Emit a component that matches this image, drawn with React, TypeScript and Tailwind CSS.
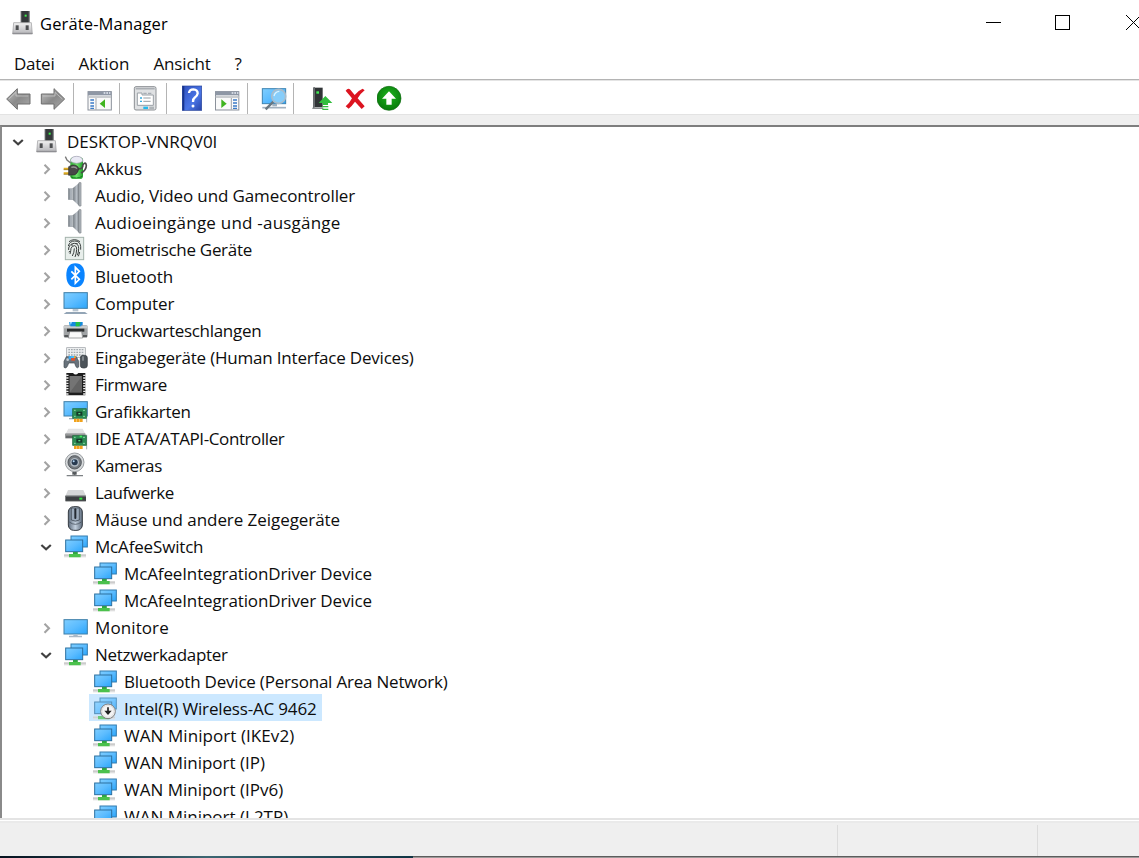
import type { ReactNode } from 'react';

interface TreeItem {
  label: string;
  icon: ReactNode;
  level: 0 | 1 | 2;
  open?: boolean;
  selected?: boolean;
  tracking?: string;
}

// Gradients shared by all icons
function Defs() {
  return (
    <svg width="0" height="0" className="absolute">
      <defs>
        <linearGradient id="screen" x1="0" y1="0" x2="1" y2="1">
          <stop offset="0" stopColor="#7fceff" />
          <stop offset="0.5" stopColor="#5cbcff" />
          <stop offset="1" stopColor="#2aa5fb" />
        </linearGradient>
        <linearGradient id="metal" x1="0" y1="0" x2="0" y2="1">
          <stop offset="0" stopColor="#f2f2f2" />
          <stop offset="1" stopColor="#b4b4b8" />
        </linearGradient>
        <linearGradient id="cone" x1="0" y1="0" x2="1" y2="0">
          <stop offset="0" stopColor="#6d747b" />
          <stop offset="0.6" stopColor="#b9c0c7" />
          <stop offset="1" stopColor="#6f757b" />
        </linearGradient>
        <linearGradient id="arrow" x1="0" y1="0" x2="1" y2="1">
          <stop offset="0" stopColor="#c4c4c4" />
          <stop offset="0.5" stopColor="#8a8a8a" />
          <stop offset="1" stopColor="#a9a9a9" />
        </linearGradient>
        <linearGradient id="book" x1="0" y1="0" x2="1" y2="1">
          <stop offset="0" stopColor="#2f50bd" />
          <stop offset="0.6" stopColor="#4a75e6" />
          <stop offset="1" stopColor="#2743a8" />
        </linearGradient>
        <linearGradient id="battery" x1="0" y1="0" x2="1" y2="0">
          <stop offset="0" stopColor="#2fae35" />
          <stop offset="0.5" stopColor="#6fe36c" />
          <stop offset="1" stopColor="#1e9a28" />
        </linearGradient>
        <linearGradient id="mouseBody" x1="0" y1="0" x2="1" y2="0">
          <stop offset="0" stopColor="#5d6b7c" />
          <stop offset="0.5" stopColor="#c3d0de" />
          <stop offset="1" stopColor="#5d6b7c" />
        </linearGradient>
        <radialGradient id="go" cx="0.5" cy="0.4" r="0.6">
          <stop offset="0" stopColor="#1db41d" />
          <stop offset="1" stopColor="#087a0b" />
        </radialGradient>
      </defs>
    </svg>
  );
}

function Icon({ children }: { children: ReactNode }) {
  return (
    <svg viewBox="0 0 75 81" className="h-[27px] w-[25px] shrink-0">
      {children}
    </svg>
  );
}

const hostIcon = (
  <Icon>
    <rect x="29" y="6" width="27" height="35" fill="#55595b" />
    <rect x="33" y="6" width="19" height="34" fill="#35393b" />
    <rect x="41" y="17" width="6" height="6" fill="#3df04b" />
    <path d="M8 41H61L64 75H5Z" fill="url(#metal)" stroke="#98989c" strokeWidth="2" />
    <path d="M5 73H64" stroke="#8a8a8e" strokeWidth="3" />
    <rect x="14" y="49" width="9" height="14" fill="#4e5052" />
    <rect x="44" y="49" width="9" height="14" fill="#4e5052" />
  </Icon>
);

const batteryIcon = (
  <Icon>
    <rect x="22" y="10" width="38" height="65" rx="10" fill="url(#battery)" />
    <path d="M22 22Q23 7 41 7T60 22Q50 28 41 28T22 22" fill="#e9e9f4" stroke="#9a9aac" strokeWidth="2" />
    <path d="M7 8L12 18L23 27" stroke="#777" strokeWidth="4" fill="none" />
    <path d="M46 45Q60 45 60 32Q68 22 70 34Q70 50 54 57" stroke="#4a4a4a" strokeWidth="5" fill="none" />
    <path d="M2 44H18M2 58H18" stroke="#e0ac20" strokeWidth="6" />
    <path d="M2 47H18M2 61H18" stroke="#896610" strokeWidth="2" />
    <path d="M17 38L28 33Q44 32 47 44Q46 56 36 62L17 64Z" fill="#484848" stroke="#292929" strokeWidth="2" />
    <path d="M25 40Q36 37 42 44" stroke="#969696" strokeWidth="4" fill="none" />
    <path d="M23 68Q40 77 58 67" stroke="#137b1c" strokeWidth="3" fill="none" />
  </Icon>
);

const speakerIcon = (
  <Icon>
    <rect x="16" y="23" width="14" height="33" fill="url(#cone)" stroke="#7b8289" />
    <path d="M29 22L49 5V75L29 56Z" fill="url(#cone)" />
    <path d="M48 5H54V75H48Z" fill="#b4babf" stroke="#7c8288" strokeWidth="2" />
    <path d="M29 22V56" stroke="#e4e8eb" strokeWidth="2" />
  </Icon>
);

const fingerprintIcon = (
  <Icon>
    <rect x="7" y="7" width="55" height="67" fill="#e8eeeb" stroke="#a3b3ac" strokeWidth="3" />
    <g fill="none" stroke="#3c4140" strokeWidth="3">
      <path d="M18 20Q34 8 51 20" />
      <path d="M16 33Q20 18 35 18Q52 18 53 35V44" />
      <path d="M17 45V39Q21 25 35 25Q47 26 47 40Q47 52 43 61" />
      <path d="M21 57Q24 46 24 40Q27 32 35 32Q42 33 41 44Q40 57 36 66" />
      <path d="M28 63Q34 52 34 40M50 51Q48 59 46 64" />
      <path d="M18 52L20 48M24 30H30M38 26H44" />
    </g>
  </Icon>
);

const bluetoothIcon = (
  <Icon>
    <path d="M37 4Q65 5 65 40T37 76Q10 75 10 40T37 4Z" fill="#0a84ff" />
    <path d="M25 28L49 52L37 64V16L49 28L25 52" fill="none" stroke="#fff" strokeWidth="5" />
  </Icon>
);

const computerIcon = (
  <Icon>
    <rect x="3" y="11" width="70" height="47" fill="url(#screen)" stroke="#3f7fa8" strokeWidth="3" />
    <path d="M29 60H46V67H29Z" fill="#b7c4d0" />
    <path d="M10 69H66L74 75H2Z" fill="#93a5b6" />
  </Icon>
);

const printerIcon = (
  <Icon>
    <path d="M18 18H59V34H18Z" fill="#1689df" />
    <path d="M38 18H52V34H38Z" fill="#23c441" />
    <path d="M20 18H27L24 32H18Z" fill="#92d5fa" />
    <rect x="2" y="28" width="72" height="36" rx="4" fill="#a1a4a6" />
    <path d="M2 30H74V37H2Z" fill="#c9cccd" />
    <path d="M22 23H55V31H22Z" fill="#1689df" />
    <path d="M38 23H50V31H38Z" fill="#23c441" />
    <rect x="12" y="38" width="52" height="9" fill="#2c2e2f" />
    <path d="M20 47H56L59 66H16Z" fill="#fafafa" stroke="#77797a" strokeWidth="2" />
    <rect x="4" y="57" width="12" height="7" fill="#55585a" />
    <rect x="60" y="57" width="12" height="7" fill="#55585a" />
  </Icon>
);

const hidIcon = (
  <Icon>
    <rect x="11" y="14" width="56" height="30" fill="#eceeef" stroke="#9a9fa3" strokeWidth="2" />
    <path d="M16 20H62M16 28H62M16 36H62" stroke="#a3aaaf" strokeWidth="4" strokeDasharray="5 3" />
    <path d="M10 41H40L47 55V72Q40 80 35 60H17Q11 80 3 73V55Z" fill="#68727b" stroke="#41484e" strokeWidth="2" />
    <circle cx="14" cy="50" r="4" fill="#c4cbd0" />
    <rect x="17" y="39" width="7" height="10" fill="#3aa8f2" />
    <rect x="25" y="45" width="11" height="8" fill="#e54e2a" />
    <rect x="24" y="39" width="9" height="6" fill="#48b7f7" />
    <rect x="33" y="40" width="5" height="5" fill="#f1b32a" />
    <rect x="52" y="37" width="21" height="38" rx="8" fill="#4c5359" stroke="#343a3f" strokeWidth="2" />
    <path d="M60 40V53" stroke="#b4bcc2" strokeWidth="3" />
  </Icon>
);

const firmwareIcon = (
  <Icon>
    <path d="M10 9H30Q38 18 46 9H67V76H10Z" fill="#1d1d1d" />
    <rect x="20" y="18" width="37" height="50" fill="#636363" />
    <path d="M20 18H57L20 68Z" fill="#747474" />
    <path d="M13 14V75M64 14V75" stroke="#efefef" strokeWidth="7" strokeDasharray="4 4" />
  </Icon>
);

const card = (
  <>
    <path d="M71 32V76" stroke="#a8adaf" strokeWidth="3" />
    <rect x="29" y="35" width="41" height="29" fill="#2b8c53" stroke="#1d6b3c" strokeWidth="2" />
    <rect x="40" y="44" width="18" height="12" fill="#16382a" />
    <rect x="46" y="48" width="6" height="4" fill="#55d984" />
    <path d="M33 40H38M60 40H66M33 58H38M60 58H66" stroke="#8bd6a5" strokeWidth="3" />
    <path d="M33 70H60" stroke="#f0a21c" strokeWidth="10" strokeDasharray="8 1" />
  </>
);

const graphicsIcon = (
  <Icon>
    <rect x="3" y="14" width="70" height="43" fill="url(#screen)" stroke="#3f7fa8" strokeWidth="3" />
    <path d="M18 65H32" stroke="#9cacb8" strokeWidth="4" />
    {card}
  </Icon>
);

const ideIcon = (
  <Icon>
    <path d="M16 14H59L67 29H8Z" fill="#e2e2e3" />
    <rect x="7" y="29" width="60" height="14" fill="#66696b" />
    <path d="M7 29H67V35H7Z" fill="#97999a" />
    {card}
    <rect x="50" y="35" width="7" height="5" fill="#42f158" />
  </Icon>
);

const cameraIcon = (
  <Icon>
    <path d="M35 60V73M11 74H60" stroke="#7d8184" strokeWidth="4" />
    <rect x="28" y="62" width="13" height="9" fill="#54585b" />
    <circle cx="35" cy="34" r="28" fill="#d7dadc" stroke="#999da0" strokeWidth="3" />
    <circle cx="35" cy="34" r="20" fill="#767b80" stroke="#53585d" strokeWidth="3" />
    <circle cx="35" cy="34" r="13" fill="#afb9c2" />
    <circle cx="35" cy="34" r="9" fill="#283a50" />
    <circle cx="32" cy="31" r="3" fill="#b5d9f7" />
  </Icon>
);

const driveIcon = (
  <Icon>
    <path d="M15 36H61L69 54H7Z" fill="#d6d7d8" />
    <rect x="7" y="53" width="62" height="17" rx="2" fill="#3d4042" />
    <path d="M7 54H69" stroke="#85888a" strokeWidth="3" />
    <rect x="49" y="59" width="9" height="6" fill="#30e53c" />
    <path d="M8 70H68" stroke="#a5a7a8" strokeWidth="2" />
  </Icon>
);

const mouseIcon = (
  <Icon>
    <rect x="16" y="5" width="42" height="71" rx="16" fill="url(#mouseBody)" stroke="#353b42" strokeWidth="3" />
    <path d="M25 9H49V45Q37 52 25 45Z" fill="#9cabbc" stroke="#2f3640" strokeWidth="2" />
    <path d="M37 13V39" stroke="#242a32" strokeWidth="6" strokeLinecap="round" />
    <path d="M19 51Q37 65 55 51" fill="none" stroke="#3b444f" strokeWidth="2" />
  </Icon>
);

const networkShapes = (
  <>
    <rect x="24" y="12" width="49" height="33" fill="url(#screen)" stroke="#337caf" strokeWidth="3" />
    <rect x="3" y="66" width="66" height="10" fill="#dedede" />
    <path d="M3 70H69" stroke="#bdbdbd" strokeWidth="2" />
    <path d="M30 60H44V66H53V76H18V66H30Z" fill="#4bc14d" />
    <path d="M30 61H44V65H30Z" fill="#239f36" />
    <rect x="8" y="24" width="51" height="35" fill="url(#screen)" stroke="#2d70a0" strokeWidth="3" />
  </>
);

const networkIcon = <Icon>{networkShapes}</Icon>;

const disabledNetworkIcon = (
  <Icon>
    <g opacity="0.75">{networkShapes}</g>
    <circle cx="48" cy="52" r="22" fill="#f4f4f4" stroke="#7c7c7c" strokeWidth="3" />
    <circle cx="48" cy="52" r="18" fill="none" stroke="#d6d6d6" strokeWidth="2" />
    <path d="M48 40V55" stroke="#222" strokeWidth="5" />
    <path d="M37 50H59L48 63Z" fill="#222" />
  </Icon>
);

const monitorIcon = (
  <Icon>
    <rect x="3" y="20" width="70" height="43" fill="url(#screen)" stroke="#3f7fa8" strokeWidth="3" />
    <path d="M31 65H44V68H57V73H18V68H31Z" fill="#aab8c6" />
  </Icon>
);

const items: TreeItem[] = [
  { label: 'DESKTOP-VNRQV0I', icon: hostIcon, level: 0, open: true, tracking: 'tracking-[-0.05px]' },
  { label: 'Akkus', icon: batteryIcon, level: 1 },
  { label: 'Audio, Video und Gamecontroller', icon: speakerIcon, level: 1, tracking: 'tracking-[-0.12px]' },
  { label: 'Audioeingänge und -ausgänge', icon: speakerIcon, level: 1, tracking: 'tracking-[0.22px]' },
  { label: 'Biometrische Geräte', icon: fingerprintIcon, level: 1, tracking: 'tracking-[-0.3px]' },
  { label: 'Bluetooth', icon: bluetoothIcon, level: 1 },
  { label: 'Computer', icon: computerIcon, level: 1, tracking: 'tracking-[-0.1px]' },
  { label: 'Druckwarteschlangen', icon: printerIcon, level: 1, tracking: 'tracking-[-0.3px]' },
  { label: 'Eingabegeräte (Human Interface Devices)', icon: hidIcon, level: 1, tracking: 'tracking-[-0.2px]' },
  { label: 'Firmware', icon: firmwareIcon, level: 1, tracking: 'tracking-[-0.35px]' },
  { label: 'Grafikkarten', icon: graphicsIcon, level: 1, tracking: 'tracking-[-0.28px]' },
  { label: 'IDE ATA/ATAPI-Controller', icon: ideIcon, level: 1, tracking: 'tracking-[-0.4px]' },
  { label: 'Kameras', icon: cameraIcon, level: 1, tracking: 'tracking-[-0.4px]' },
  { label: 'Laufwerke', icon: driveIcon, level: 1, tracking: 'tracking-[-0.4px]' },
  { label: 'Mäuse und andere Zeigegeräte', icon: mouseIcon, level: 1, tracking: 'tracking-[-0.06px]' },
  { label: 'McAfeeSwitch', icon: networkIcon, level: 1, open: true, tracking: 'tracking-[-0.17px]' },
  { label: 'McAfeeIntegrationDriver Device', icon: networkIcon, level: 2, tracking: 'tracking-[-0.13px]' },
  { label: 'McAfeeIntegrationDriver Device', icon: networkIcon, level: 2, tracking: 'tracking-[-0.13px]' },
  { label: 'Monitore', icon: monitorIcon, level: 1, tracking: 'tracking-[0.1px]' },
  { label: 'Netzwerkadapter', icon: networkIcon, level: 1, open: true, tracking: 'tracking-[-0.3px]' },
  { label: 'Bluetooth Device (Personal Area Network)', icon: networkIcon, level: 2, tracking: 'tracking-[-0.21px]' },
  { label: 'Intel(R) Wireless-AC 9462', icon: disabledNetworkIcon, level: 2, selected: true, tracking: 'tracking-[-0.17px]' },
  { label: 'WAN Miniport (IKEv2)', icon: networkIcon, level: 2, tracking: 'tracking-[0.07px]' },
  { label: 'WAN Miniport (IP)', icon: networkIcon, level: 2 },
  { label: 'WAN Miniport (IPv6)', icon: networkIcon, level: 2 },
  { label: 'WAN Miniport (L2TP)', icon: networkIcon, level: 2 },
];

const indent = { 0: 'pl-[10px]', 1: 'pl-[38px]', 2: 'pl-[67px]' };

function TreeRow({ item }: { item: TreeItem }) {
  return (
    <div className={`flex h-[27px] shrink-0 items-center ${indent[item.level]}`}>
      <svg viewBox="0 0 18 27" className="h-[27px] w-[18px] shrink-0" fill="none">
        {item.level < 2 && item.open && (
          <path d="M3.4 13L8.1 17.3L12.8 13" stroke="#404040" strokeWidth="2.2" />
        )}
        {item.level < 2 && !item.open && (
          <path d="M6.5 10.8L11 15.3L6.5 19.8" stroke="#a3a3a3" strokeWidth="2.1" />
        )}
      </svg>
      <div className={`ml-[4px] flex h-[27px] items-center pr-[5px] pl-[3px] ${item.selected ? 'bg-[#cce8ff]' : ''}`}>
        {item.icon}
        <span className={`ml-[7px] pt-[2px] whitespace-pre ${item.tracking ?? 'tracking-normal'}`}>{item.label}</span>
      </div>
    </div>
  );
}

function Separator({ className }: { className: string }) {
  return <div className={`mt-[2px] h-[31px] w-px bg-[#b4b4b4] ${className}`} />;
}

function ToolIcon({ className, children }: { className: string; children: ReactNode }) {
  return (
    <svg viewBox="0 0 81 99" className={`h-[33px] w-[27px] shrink-0 ${className}`}>
      {children}
    </svg>
  );
}

function Toolbar() {
  return (
    <div className="flex h-[33px] shrink-0 bg-white pl-[5px]">
      <ToolIcon className="">
        <path d="M5 54L37 23V39H75V69H37V85Z" fill="url(#arrow)" stroke="#6e6e6e" strokeWidth="3" />
        <path d="M12 54L33 34V45H70" fill="none" stroke="#cfcfcf" strokeWidth="2" />
      </ToolIcon>
      <ToolIcon className="ml-[7px]">
        <path d="M77 54L45 23V39H7V69H45V85Z" fill="url(#arrow)" stroke="#6e6e6e" strokeWidth="3" />
        <path d="M70 54L48 34V45H12" fill="none" stroke="#cfcfcf" strokeWidth="2" />
      </ToolIcon>
      <Separator className="ml-[7px]" />
      {/* console tree */}
      <ToolIcon className="ml-[13px]">
        <rect x="3" y="32" width="70" height="55" fill="#fafafa" stroke="#8b919b" strokeWidth="3" />
        <rect x="3" y="31" width="70" height="12" fill="#8e97a5" />
        <path d="M50 36H70" stroke="#e8edf5" strokeWidth="4" strokeDasharray="5 3" />
        <path d="M4 48H72" stroke="#c0c3c7" strokeWidth="5" />
        <path d="M27 51V86" stroke="#a0a5ac" strokeWidth="3" />
        <path d="M10 57H21M10 66H21M10 75H21M10 82H21" stroke="#3b7bc8" strokeWidth="4" />
        <path d="M54 55V81L38 68Z" fill="#3fb41f" />
      </ToolIcon>
      <Separator className="ml-[5px]" />
      {/* properties */}
      <ToolIcon className="ml-[13px]">
        <rect x="4" y="17" width="65" height="70" rx="5" fill="#dfe1e3" stroke="#8b8f93" strokeWidth="3" />
        <path d="M8 23H65" stroke="#aaaeb3" strokeWidth="5" />
        <path d="M13 36H27V42H61V73H13Z" fill="#fff" stroke="#9aa0a6" strokeWidth="3" />
        <path d="M31 37H57" stroke="#a7adb3" strokeWidth="4" strokeDasharray="10 4" />
        <path d="M21 51H27M21 61H27" stroke="#35a9dd" strokeWidth="4" />
        <path d="M31 51H53M31 61H53" stroke="#969ca2" strokeWidth="3" />
        <rect x="31" y="77" width="14" height="7" fill="#21b9ef" />
        <rect x="49" y="77" width="14" height="7" fill="#aeb4b8" />
      </ToolIcon>
      <Separator className="ml-[6px]" />
      {/* help */}
      <ToolIcon className="ml-[13px]">
        <rect x="7" y="15" width="58" height="73" fill="url(#book)" stroke="#29459d" strokeWidth="2" />
        <path d="M10 15V88" stroke="#18358e" strokeWidth="6" />
        <path d="M27 36Q28 25 40 25Q53 26 53 37Q52 44 45 49Q39 53 39 63" fill="none" stroke="#fff" strokeWidth="7" />
        <circle cx="39" cy="75" r="4.5" fill="#fff" />
      </ToolIcon>
      {/* action pane */}
      <ToolIcon className="ml-[8px]">
        <rect x="1.5" y="32" width="70" height="55" fill="#fafafa" stroke="#8b919b" strokeWidth="3" />
        <rect x="1" y="31" width="71" height="12" fill="#8e97a5" />
        <path d="M50 36H70" stroke="#e8edf5" strokeWidth="4" strokeDasharray="5 3" />
        <path d="M2 48H71" stroke="#c0c3c7" strokeWidth="5" />
        <path d="M49 51V86" stroke="#a0a5ac" strokeWidth="3" />
        <path d="M54 57H66M54 66H66M54 75H66M54 82H66" stroke="#3b7bc8" strokeWidth="4" />
        <path d="M19 55V81L35 68Z" fill="#3fb41f" />
      </ToolIcon>
      <Separator className="ml-[5px]" />
      {/* scan for changes */}
      <ToolIcon className="ml-[13px]">
        <rect x="4" y="23" width="70" height="45" fill="url(#screen)" stroke="#3e83b2" strokeWidth="3" />
        <path d="M34 69H48V76H34Z" fill="#9fb0bf" />
        <path d="M4 80H75" stroke="#a2b1bf" strokeWidth="5" />
        <path d="M37 62L14 85" stroke="#697781" strokeWidth="7" />
        <circle cx="53" cy="46" r="21" fill="#86cdfa" stroke="#a9bccb" strokeWidth="5" />
        <path d="M39 45Q42 32 55 31" fill="none" stroke="#dbf3ff" strokeWidth="4" />
      </ToolIcon>
      <Separator className="ml-[5px]" />
      {/* update driver */}
      <ToolIcon className="ml-[17px]">
        <path d="M6 20H35V79H6Z" fill="#303436" />
        <path d="M6 20L12 18V78L6 83Z" fill="#686c6f" />
        <rect x="16" y="31" width="8" height="7" fill="#42ed54" />
        <path d="M4 80H37V84H4Z" fill="#8b8f91" />
        <path d="M43 45L64 66H51V72H35V66H23Z" fill="#30bd3c" />
        <path d="M34 77H52M34 85H52" stroke="#30bd3c" strokeWidth="4" />
      </ToolIcon>
      {/* uninstall */}
      <ToolIcon className="ml-[6px]">
        <path d="M5 29Q12 20 19 26L32 42Q43 28 56 23L62 28Q49 38 41 52L62 76L53 84L33 62Q24 75 14 83L5 76Q17 66 24 52Z" fill="#dc1420" />
      </ToolIcon>
      {/* enable */}
      <ToolIcon className="ml-[6px]">
        <circle cx="36" cy="52" r="36" fill="url(#go)" stroke="#116b12" strokeWidth="2" />
        <path d="M36 31L57 53H44V71H28V53H15Z" fill="#fff" />
      </ToolIcon>
    </div>
  );
}

export default function App() {
  return (
    <div className="flex h-screen w-screen flex-col overflow-hidden bg-white font-['Open_Sans','Noto_Sans',sans-serif] text-[17px] leading-[27px] text-[#0d0d0d]">
      <Defs />
      {/* Title bar */}
      <div className="flex h-[48px] shrink-0 justify-between overflow-hidden">
        <div className="flex items-center pb-[2px] pl-[11px] text-black">
          <div className="pb-[1px]">{hostIcon}</div>
          <span className="ml-[4px] text-[16.5px] tracking-[0.14px]">Geräte-Manager</span>
        </div>
        <svg viewBox="0 0 153 48" className="h-[48px] w-[153px]" fill="none" stroke="#000">
          <path d="M0 22.5H15" />
          <rect x="69.5" y="15.5" width="14" height="14" />
          <path d="M140 15L155 30M155 15L140 30" />
        </svg>
      </div>
      {/* Menu */}
      <div className="flex h-[31px] shrink-0 items-center gap-[24px] pl-[14px]">
        <span className="tracking-[-0.25px]">Datei</span>
        <span className="tracking-[0.05px]">Aktion</span>
        <span className="tracking-[-0.15px]">Ansicht</span>
        <span>?</span>
      </div>
      <div className="h-[2px] shrink-0 border-t border-[#b4b4b4] bg-[#e4e4e4]" />
      <Toolbar />
      <div className="h-[11px] shrink-0 border-t border-[#e3e3e3] bg-[#efefef]" />
      {/* Device tree */}
      <div className="h-[693px] shrink-0 overflow-hidden border-t-2 border-l-2 border-t-[#7e7e7e] border-l-[#8a8a8a]">
        <div className="-ml-[2px] flex flex-col">
          {items.map((item, i) => (
            <TreeRow key={i} item={item} />
          ))}
        </div>
      </div>
      <div className="h-[3px] shrink-0 border-t-2 border-[#e4e4e4] bg-white" />
      {/* Status bar */}
      <div className="flex h-[35px] shrink-0 border-t-2 border-[#eaeaea] bg-[#efefef] pt-[2px]">
        <div className="h-[31px] w-[838px] border-r border-[#dcdcdc]" />
        <div className="h-[31px] w-[200px] border-r border-[#dcdcdc]" />
      </div>
      <div className="flex h-[2px] shrink-0">
        <div className="w-[413px] bg-linear-to-r from-[#06121f] via-[#3c6672] to-[#103544]" />
        <div className="flex-1 border-t border-[#5c5c5c] bg-[#9c9999]" />
      </div>
    </div>
  );
}
